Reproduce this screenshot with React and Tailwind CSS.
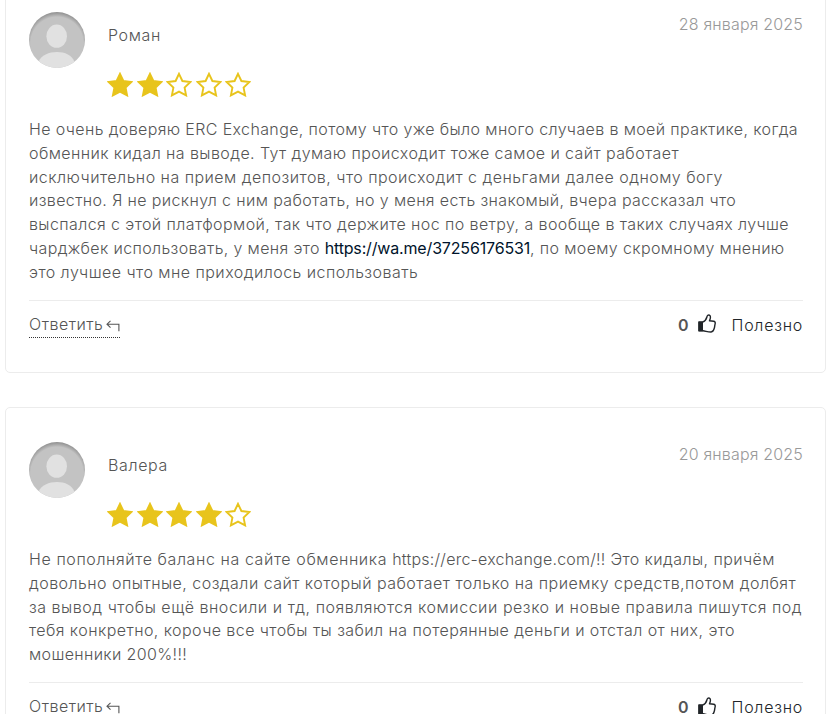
function Avatar() {
  return (
    <svg viewBox="0 0 56 56" className="h-14 w-14 shrink-0">
      <defs>
        <clipPath id="disc"><circle cx="28" cy="28" r="28" /></clipPath>
        <radialGradient id="shade" cx="0.5" cy="0.56" r="0.56">
          <stop offset="0.84" stopColor="#c3c3c3" />
          <stop offset="1" stopColor="#8e8e8e" />
        </radialGradient>
      </defs>
      <g clipPath="url(#disc)">
        <rect width="56" height="56" fill="url(#shade)" />
        <ellipse cx="27.7" cy="24.2" rx="10.3" ry="11.6" fill="#e1e1e1" />
        <path d="M9.5 56V50C12 43 20 40 28 40s15 3 17.5 10v6Z" fill="#e1e1e1" />
      </g>
    </svg>
  );
}

const STAR =
  "M13 1.8 16.4 9 24.4 10 18.6 15.6 20.1 23.4 13 19.6 5.9 23.4 7.4 15.6 1.6 10 9.6 9Z";

function Stars({ count }) {
  return (
    <div className="flex gap-[3.5px]">
      {[1, 2, 3, 4, 5].map((n) => (
        <svg key={n} viewBox="0 0 26 25" className="h-[25px] w-[26px]">
          <path d={STAR} fill={n <= count ? "#e8c41c" : "none"} stroke="#e8c41c" strokeWidth="1.9" />
        </svg>
      ))}
    </div>
  );
}

function ThumbIcon() {
  return (
    <svg viewBox="0 0 18 19" className="-mt-0.5 h-[19px] w-[18px]" fill="none" stroke="#212529" strokeWidth="1.4" strokeLinejoin="round" strokeLinecap="round">
      <path d="M.4 7.4H5V17.3H.4Z" fill="#212529" stroke="none" />
      <path d="M1 8.2H4.6C6.9 7.2 8.3 5.3 8.9 3 9.1 1.6 9.7 1 10.6 1c1.2 0 1.9 1 1.8 2.4 0 1.4-.6 2.5-.9 3.4l4.2.5c1.1.2 1.7 1 1.5 2-.1.9-.3 1.4-.4 2.1-.1 1-.2 1.9-.5 2.8-.5 2.3-1.4 3.7-3.2 3.8C10.3 18.1 7.6 17.1 5 16.8H1Z" />
    </svg>
  );
}

function ReplyIcon() {
  return (
    <svg viewBox="0 0 14 12" className="mt-0.5 h-3 w-3.5" fill="none" stroke="#555" strokeWidth="1.1">
      <path d="M4.5.8 1 4.2 4.5 7.6M1 4.2H12.9V11.2" />
    </svg>
  );
}

function Review({ name, date, stars, children }) {
  return (
    <article className="w-[821px] rounded-[5px] border border-[#ececec] bg-white pr-[22px] pl-[23px]">
      <header className="flex h-[111px] pt-[34px]">
        <Avatar />
        <div className="ml-[23px]">
          <div className="mt-[11px] leading-6 tracking-[0.62px]">{name}</div>
          <div className="-ml-px mt-[25px]">
            <Stars count={stars} />
          </div>
        </div>
        <time className="ml-auto h-6 leading-6 tracking-[0.18px] text-[#999]">{date}</time>
      </header>
      <p className="mt-[29.4px] leading-[23.68px] whitespace-nowrap">{children}</p>
      <footer className="mt-[15.6px] flex justify-between border-t border-[#ececec] pt-3">
        <button className="flex h-[25px] items-center gap-[3px] border-b border-dotted border-[#333]">
          <span className="-mt-0.5 leading-6 tracking-[0.5px]">Ответить</span>
          <ReplyIcon />
        </button>
        <div className="flex h-6 items-center text-[#212529]">
          <span className="mr-[9px] font-semibold text-[#555]">0</span>
          <ThumbIcon />
          <span className="ml-4 tracking-[0.74px]">Полезно</span>
        </div>
      </footer>
    </article>
  );
}

function Line({ className, children }) {
  return <span className={`block ${className}`}>{children}</span>;
}

export default function App() {
  return (
    <main className="h-[714px] overflow-hidden bg-white pl-[5px] font-['Inter','Liberation_Sans',sans-serif] text-[16px] font-light text-[#555]">
      <div className="-mt-[23px] flex flex-col gap-[34px]">
        <div className="h-[396px] [&>article]:h-full">
          <Review name="Роман" date="28 января 2025" stars={2}>
            <Line className="tracking-[0.378px]">Не очень доверяю ERC Exchange, потому что уже было много случаев в моей практике, когда</Line>
            <Line className="tracking-[0.411px]">обменник кидал на выводе. Тут думаю происходит тоже самое и сайт работает</Line>
            <Line className="tracking-[0.476px]">исключительно на прием депозитов, что происходит с деньгами далее одному богу</Line>
            <Line className="tracking-[0.376px]">известно. Я не рискнул с ним работать, но у меня есть знакомый, вчера рассказал что</Line>
            <Line className="tracking-[0.407px]">выспался с этой платформой, так что держите нос по ветру, а вообще в таких случаях лучше</Line>
            <Line className="tracking-[0.36px]">
              чарджбек использовать, у меня это{" "}
              <a className="font-normal tracking-[-0.16px] text-[#00132b]">https://wa.me/37256176531</a>, по моему скромному мнению
            </Line>
            <Line className="tracking-[0.456px]">это лучшее что мне приходилось использовать</Line>
          </Review>
        </div>
        <div className="h-[396px]">
          <Review name="Валера" date="20 января 2025" stars={4}>
            <Line className="tracking-[0.42px]">
              <span className="tracking-[0.59px]">Не пополняйте баланс на сайте обменника </span>
              <span className="tracking-[0.23px]">https://erc-exchange.com/!!</span> Это кидалы, причём
            </Line>
            <Line className="tracking-[0.465px]">довольно опытные, создали сайт который работает только на приемку средств,потом долбят</Line>
            <Line className="tracking-[0.53px]">за вывод чтобы ещё вносили и тд, появляются комиссии резко и новые правила пишутся под</Line>
            <Line className="tracking-[0.432px]">тебя конкретно, короче все чтобы ты забил на потерянные деньги и отстал от них, это</Line>
            <Line className="tracking-[0.35px]">мошенники 200%!!!</Line>
          </Review>
        </div>
      </div>
    </main>
  );
}
